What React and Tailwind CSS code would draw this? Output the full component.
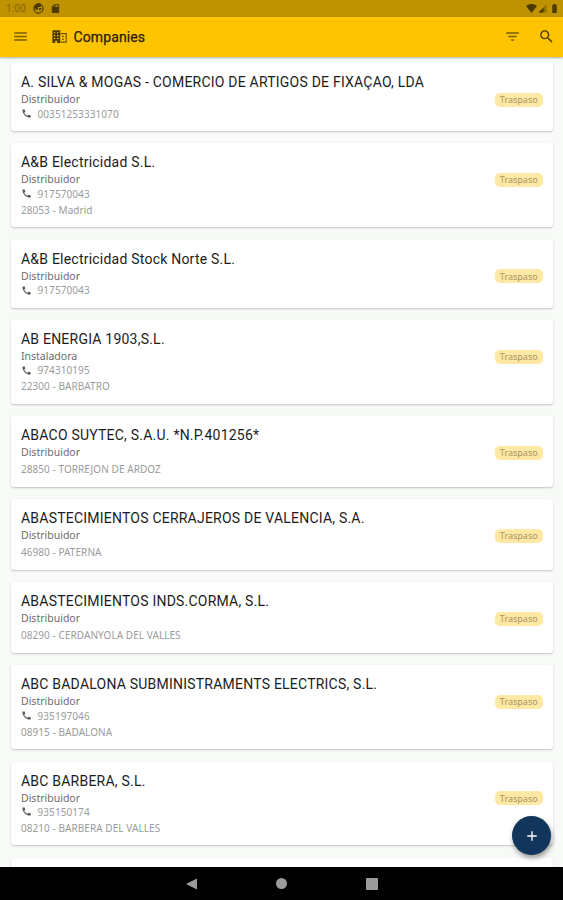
import React from "react";
import {
  MdAdd,
  MdBatteryFull,
  MdCall,
  MdFilterList,
  MdMenu,
  MdSdCard,
  MdSearch,
} from "react-icons/md";

const companies = [
  { name: "A. SILVA & MOGAS - COMERCIO DE ARTIGOS DE FIXAÇAO, LDA", type: "Distribuidor", phone: "00351253331070" },
  { name: "A&B Electricidad S.L.", type: "Distribuidor", phone: "917570043", city: "28053 - Madrid" },
  { name: "A&B Electricidad Stock Norte S.L.", type: "Distribuidor", phone: "917570043" },
  { name: "AB ENERGIA 1903,S.L.", type: "Instaladora", phone: "974310195", city: "22300 - BARBATRO" },
  { name: "ABACO SUYTEC, S.A.U. *N.P.401256*", type: "Distribuidor", city: "28850 - TORREJON DE ARDOZ" },
  { name: "ABASTECIMIENTOS CERRAJEROS DE VALENCIA, S.A.", type: "Distribuidor", city: "46980 - PATERNA" },
  { name: "ABASTECIMIENTOS INDS.CORMA, S.L.", type: "Distribuidor", city: "08290 - CERDANYOLA DEL VALLES" },
  { name: "ABC BADALONA SUBMINISTRAMENTS ELECTRICS, S.L.", type: "Distribuidor", phone: "935197046", city: "08915 - BADALONA" },
  { name: "ABC BARBERA, S.L.", type: "Distribuidor", phone: "935150174", city: "08210 - BARBERA DEL VALLES" },
];

const StatusBar = () => (
  <div className="flex h-[17px] shrink-0 items-center bg-[#bf9300] pl-[6px] pr-[3px] text-[#4d3b00]">
    <span className="w-[27px] text-[10px] leading-none tracking-[0.2px] text-[#846500]">1:00</span>
    <svg className="h-[11px] w-[11px]" viewBox="0 0 22 22">
      <circle cx="11" cy="11" r="9" fill="none" stroke="currentColor" strokeWidth="2.5" />
      <path d="M2 9a9 9 0 0 1 15-6l-2 5h-5v5l-3 1z" fill="currentColor" />
      <path d="M12 10h6l-5 6z" fill="currentColor" />
    </svg>
    <MdSdCard className="ml-[6px] h-[11px] w-[11px]" />
    <div className="ml-auto flex items-center">
      <svg className="h-[9px] w-[11px]" viewBox="0 0 22 18">
        <path d="M0 4a17 17 0 0 1 22 0L11 18z" fill="currentColor" />
      </svg>
      <svg className="ml-[1px] h-[9px] w-[9px]" viewBox="0 0 18 18">
        <path d="M1 17L17 1v16z" fill="currentColor" opacity="0.4" />
        <path d="M1 17L11 7v10z" fill="currentColor" />
      </svg>
      <MdBatteryFull className="ml-[2px] h-[11px] w-[11px]" />
    </div>
  </div>
);

const CompaniesIcon = () => (
  <svg className="ml-[22px] h-[17px] w-[17px]" viewBox="0 0 24 24">
    <path
      fillRule="evenodd"
      d="M2 3h11v18H2zM4 6h2v1.500H4zM8.500 6h2v1.500h-2zM4 10h2v1.500H4zM8.500 10h2v1.500h-2zM4 14h2v1.500H4zM8.500 14h2v1.500h-2zM6 18h2.500v3H6z"
      fill="currentColor"
    />
    <path d="M13 8h8.500v12H13" fill="none" stroke="currentColor" strokeWidth="1.7" opacity="0.8" />
    <path d="M15.500 11h2.500v2h-2.500zM15.500 15h2.500v2h-2.500z" fill="currentColor" opacity="0.8" />
  </svg>
);

const Header = () => (
  <header className="relative z-10 flex h-[39.5px] shrink-0 items-center bg-[#ffc400] pl-[12px] pr-[8.5px] text-[#4d3b00] shadow-[0_1px_2px_rgba(0,0,0,0.3)]">
    <MdMenu className="h-[17px] w-[17px] text-[#7a5e00]" />
    <CompaniesIcon />
    <h1 className="ml-[5.5px] pt-px text-[14px] font-normal leading-none tracking-[0.12px] text-[#2b2100] [-webkit-text-stroke:0.25px_#2b2100]">
      Companies
    </h1>
    <MdFilterList className="ml-auto h-[17px] w-[17px] text-[#7a5e00]" />
    <MdSearch className="ml-[16.5px] h-[17px] w-[17px]" />
  </header>
);

const CompanyCard = ({ company }) => (
  <div className="flex shrink-0 items-start rounded-[3px] bg-white px-[10.5px] pb-[10.5px] pt-[10px] shadow-[0_1px_2px_rgba(0,0,0,0.22)]">
    <div className="flex-1 font-['Noto_Sans',sans-serif] text-[#999c9c]">
      <h2 className="h-[18px] whitespace-nowrap font-[Roboto,sans-serif] text-[14px] leading-[18px] tracking-[0.22px] text-[#1c1c1c]">
        {company.name}
      </h2>
      <p className="h-[15.4px] text-[10.5px] leading-[17px] text-[#6c6c6c]">{company.type}</p>
      {company.phone && (
        <p className="flex h-[14px] items-center text-[10px] leading-[14px] tracking-[0.08px]">
          <MdCall className="mr-[5.5px] h-[11px] w-[11px] text-[#5c5c5c]" />
          {company.phone}
        </p>
      )}
      {company.city && (
        <p className={`${company.phone ? "mt-[2px]" : "mt-[2.7px]"} h-[14px] text-[10px] leading-[14px] tracking-[0.06px]`}>
          {company.city}
        </p>
      )}
    </div>
    <span className="mt-[19.5px] -mr-[0.5px] flex h-[14px] w-[47.5px] items-center justify-center rounded-[5px] bg-[#ffe8a3] font-['Noto_Sans',sans-serif] text-[9px] leading-none text-[#a79465]">
      Traspaso
    </span>
  </div>
);

const NavBar = () => (
  <nav className="flex h-[33px] shrink-0 items-center justify-center gap-[78.5px] bg-black text-[#9b9b9b]">
    <svg className="h-[12px] w-[12px]" viewBox="0 0 12 12">
      <path d="M0 6L11 0.5v11z" fill="currentColor" />
    </svg>
    <div className="h-[11px] w-[11px] rounded-full bg-[#9b9b9b]"></div>
    <div className="h-[12px] w-[12px] rounded-[1px] bg-[#9b9b9b]"></div>
  </nav>
);

const App = () => {
  return (
    <div className="relative flex h-[900px] w-[563px] flex-col overflow-hidden bg-[#f8faf8] font-[Roboto,sans-serif]">
      <StatusBar />
      <Header />
      <main className="flex min-h-0 flex-1 flex-col gap-[12.4px] overflow-hidden px-[10.5px] pt-[6.7px]">
        {companies.map((company) => (
          <CompanyCard key={company.name} company={company} />
        ))}
        <div className="h-[84px] shrink-0 rounded-[3px] bg-white shadow-[0_1px_2px_rgba(0,0,0,0.22)]"></div>
      </main>
      <NavBar />
      {/* Add company */}
      <button className="absolute bottom-[45px] right-[12px] flex h-[39px] w-[39px] items-center justify-center rounded-full bg-[#12355b] text-white shadow-[1px_3px_5px_rgba(0,0,0,0.4)]">
        <MdAdd className="h-[16px] w-[16px]" />
      </button>
    </div>
  );
};

export default App;
